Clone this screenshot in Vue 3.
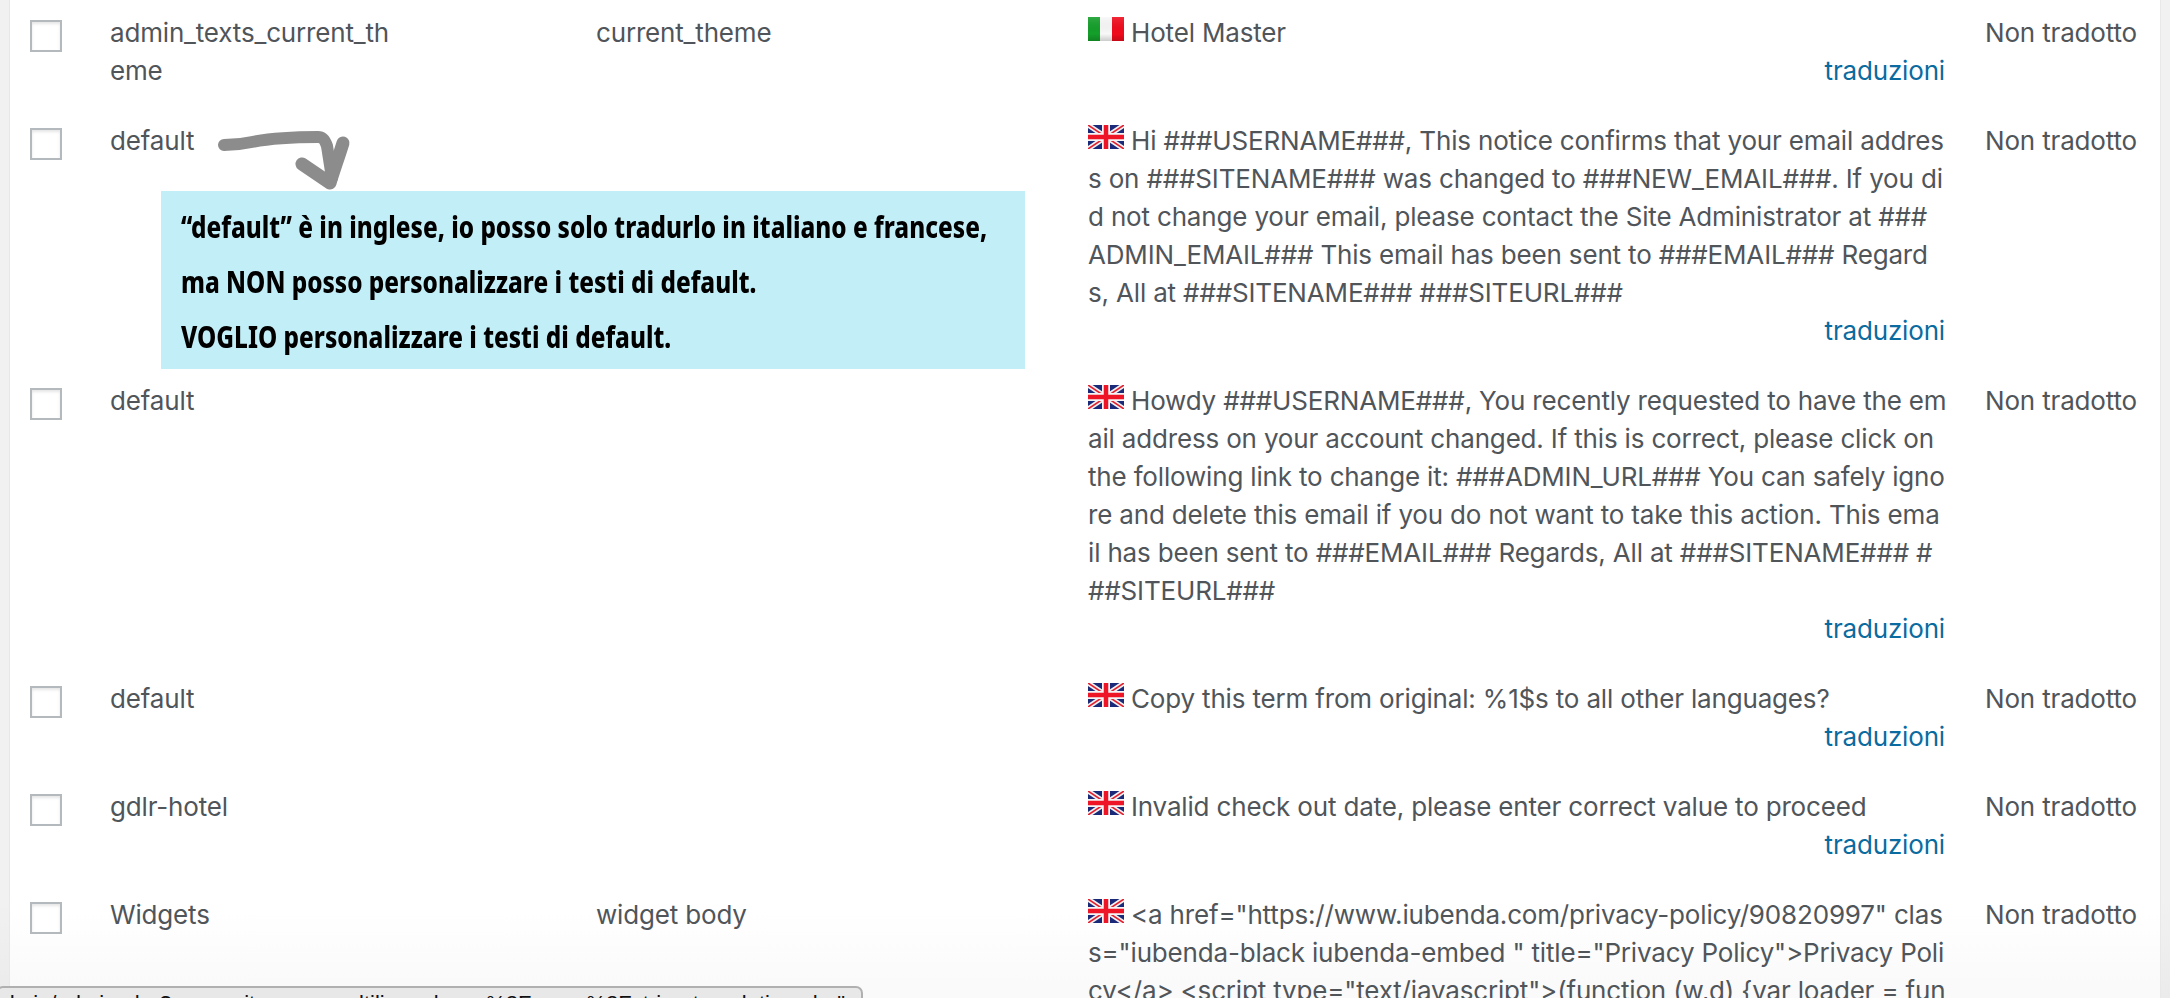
<script setup>
const rows = [
  { name: ['admin_texts_current_th', 'eme'], domain: 'current_theme', flag: 'it', lines: ['Hotel Master'], link: true },
  { name: ['default'], domain: '', flag: 'uk', lines: ['Hi ###USERNAME###, This notice confirms that your email addres', 's on ###SITENAME### was changed to ###NEW_EMAIL###. If you di', 'd not change your email, please contact the Site Administrator at ###', 'ADMIN_EMAIL### This email has been sent to ###EMAIL### Regard', 's, All at ###SITENAME### ###SITEURL###'], link: true },
  { name: ['default'], domain: '', flag: 'uk', lines: ['Howdy ###USERNAME###, You recently requested to have the em', 'ail address on your account changed. If this is correct, please click on', 'the following link to change it: ###ADMIN_URL### You can safely igno', 're and delete this email if you do not want to take this action. This ema', 'il has been sent to ###EMAIL### Regards, All at ###SITENAME### #', '##SITEURL###'], link: true },
  { name: ['default'], domain: '', flag: 'uk', lines: ['Copy this term from original: %1$s to all other languages?'], link: true },
  { name: ['gdlr-hotel'], domain: '', flag: 'uk', lines: ['Invalid check out date, please enter correct value to proceed'], link: true },
  { name: ['Widgets'], domain: 'widget body', flag: 'uk', lines: ['<a href="https://www.iubenda.com/privacy-policy/90820997" clas', 's="iubenda-black iubenda-embed " title="Privacy Policy">Privacy Poli', 'cy</a> <script type="text/javascript">(function (w,d) {var loader = fun'], link: false },
]
</script>

<template>
  <div class="page">
    <div class="table">
      <div v-for="(r, i) in rows" :key="i" class="row">
        <div class="cell-check"><span class="box"></span></div>
        <div class="cell-name"><div v-for="n in r.name" :key="n">{{ n }}</div></div>
        <div class="cell-domain">{{ r.domain }}</div>
        <div class="cell-text">
          <div v-for="(l, j) in r.lines" :key="j" class="line"><svg v-if="j === 0 && r.flag === 'it'" class="flag" viewBox="0 0 36 24" aria-hidden="true">
              <defs><linearGradient id="shade" x1="0" y1="0" x2="0" y2="1"><stop offset="0" stop-color="#fff" stop-opacity=".12" /><stop offset=".7" stop-color="#000" stop-opacity="0" /><stop offset="1" stop-color="#000" stop-opacity=".18" /></linearGradient></defs>
              <rect width="12" height="24" fill="#149f2a" /><rect x="12" width="12" height="24" fill="#f8f8f8" /><rect x="24" width="12" height="24" fill="#f00a1c" /><rect width="36" height="24" fill="url(#shade)" />
            </svg><svg v-if="j === 0 && r.flag === 'uk'" class="flag" viewBox="0 0 36 24" aria-hidden="true">
              <rect width="36" height="24" fill="#1b2a78" />
              <path d="M0 0L36 24M36 0L0 24" stroke="#f2f2f2" stroke-width="5" />
              <path d="M0 0L36 24M36 0L0 24" stroke="#e3202f" stroke-width="1.6" />
              <path d="M18 0V24M0 12H36" stroke="#f5f5f5" stroke-width="8" />
              <path d="M18 0V24M0 12H36" stroke="#ee1526" stroke-width="4.5" />
            </svg>{{ l }}</div>
          <div v-if="r.link" class="link-row"><a class="link">traduzioni</a></div>
        </div>
        <div class="cell-status">Non tradotto</div>
      </div>
    </div>

    <div class="note">
      <div class="note-text">
        <div>“default” è in inglese, io posso solo tradurlo in italiano e francese,</div>
        <div>ma NON posso personalizzare i testi di default.</div>
        <div>VOGLIO personalizzare i testi di default.</div>
      </div>
    </div>

    <svg class="arrow" viewBox="0 0 180 80" aria-hidden="true">
      <path d="M24 25C34 25 43 24 52 22C67 19 90 17 118 17C123 17 125 20 127 26L132 58" fill="none" stroke="#8c8c8c" stroke-width="12" stroke-linecap="round" stroke-linejoin="round" />
      <path d="M143 23C139 36 134 50 130 63L102 44" fill="none" stroke="#8c8c8c" stroke-width="13" stroke-linecap="round" stroke-linejoin="round" />
    </svg>

    <div class="status"><span>wp-admin/admin.php?page=sitepress-multilingual-cms%2Fmenu%2Fstring-translation.php"</span></div>
  </div>
</template>

<style>
html, body { margin: 0; background: #fff; overflow: hidden; }
</style>

<style scoped>
.page {
  position: relative;
  width: 2170px;
  height: 998px;
  overflow: hidden;
  background: linear-gradient(#f1f1f1 900px, #ebebeb);
  font-family: Inter, "Liberation Sans", Arial, sans-serif;
  font-size: 26px;
  letter-spacing: -0.17px;
  line-height: 38px;
  color: #50555a;
}
.table {
  margin: 0 10px;
  background: linear-gradient(#fff 910px, #fafafa 985px);
  height: 998px;
  overflow: hidden;
  box-shadow: 0 0 0 1px #e8e8e8;
}
.row {
  display: grid;
  grid-template-columns: 100px 486px 492px 857px 1fr;
  padding: 14px 0 18px;
}
.cell-check { padding: 6px 0 0 20px; }
.box {
  display: block;
  box-sizing: border-box;
  width: 32px;
  height: 32px;
  border: 2px solid #b4b9be;
  background: #fff;
  box-shadow: inset 0 2px 3px rgba(0, 0, 0, .1);
}
.cell-text { white-space: nowrap; }
.flag {
  display: inline-block;
  width: 36px;
  height: 24px;
  margin-right: 7px;
  vertical-align: 1px;
  filter: blur(.4px);
}
.link-row { text-align: right; }
.link { color: #0a6ba0; }
.cell-status { white-space: nowrap; padding-left: 40px; }
.note {
  position: absolute;
  left: 161px;
  top: 191px;
  width: 864px;
  height: 178px;
  padding: 8px 0 0 20px;
  box-sizing: border-box;
  background: #c2eef7;
  overflow: hidden;
}
.note-text {
  color: #000;
  font-family: "Noto Sans", "Liberation Sans", sans-serif;
  font-weight: 800;
  font-size: 30px;
  letter-spacing: 0;
  line-height: 55px;
  white-space: nowrap;
  transform: scaleX(.81);
  transform-origin: left top;
}
.arrow {
  position: absolute;
  left: 200px;
  top: 120px;
  width: 180px;
  height: 80px;
}
.status {
  position: absolute;
  left: -4px;
  top: 986px;
  width: 867px;
  height: 30px;
  display: flex;
  justify-content: flex-end;
  padding: 2px 16px 0 0;
  overflow: hidden;
  box-sizing: border-box;
  border: 2px solid #b0b0b0;
  border-radius: 7px;
  background: #e8e8e8;
  color: #111;
  font-family: "Liberation Sans", Arial, sans-serif;
  font-size: 22px;
  letter-spacing: 0;
  line-height: 28px;
  white-space: nowrap;
}
</style>
